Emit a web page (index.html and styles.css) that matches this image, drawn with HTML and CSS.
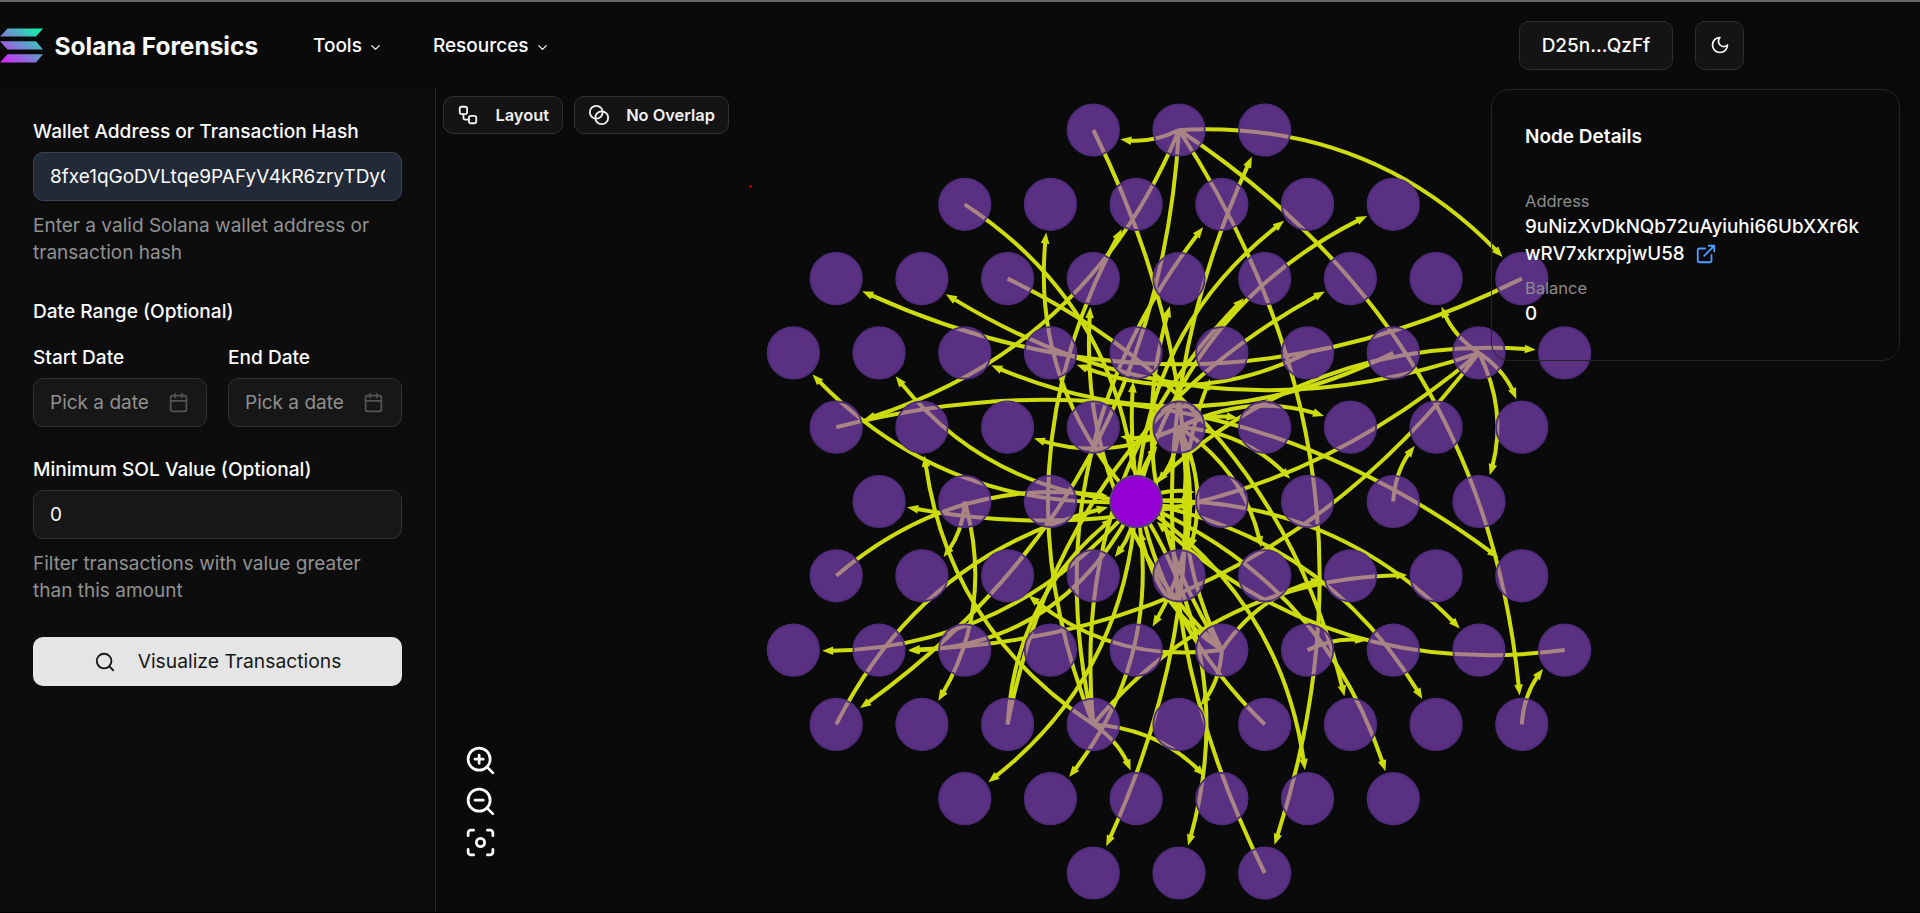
FILE: index.html
```html
<!DOCTYPE html>
<html lang="en">
<head>
<meta charset="utf-8">
<title>Solana Forensics</title>
<link rel="stylesheet" href="styles.css">
</head>
<body>
<div class="app">
  <header class="header">
    <div class="brand">
      <svg class="logo" width="43" height="35" viewBox="0 0 43 35">
        <defs><linearGradient id="sol" gradientUnits="userSpaceOnUse" x1="38" y1="-3" x2="6" y2="38"><stop offset="0" stop-color="#00ffa3"/><stop offset="1" stop-color="#dc1fff"/></linearGradient></defs>
        <g fill="url(#sol)"><path d="M7.500 .5H43L36 8.500H0z"/><path d="M0 13.200H36L43 21.400H7.500z"/><path d="M7.500 26.200H43L36 34.400H0z"/></g>
      </svg>
      <span class="brand-name">Solana Forensics</span>
    </div>
    <nav class="nav">
      <a class="nav-item">Tools <svg width="15" height="15" viewBox="0 0 24 24" class="ico"><path d="m6 9 6 6 6-6"/></svg></a>
      <a class="nav-item">Resources <svg width="15" height="15" viewBox="0 0 24 24" class="ico"><path d="m6 9 6 6 6-6"/></svg></a>
    </nav>
    <div class="actions">
      <button class="btn wallet">D25n...QzFf</button>
      <button class="btn theme"><svg width="20" height="20" viewBox="0 0 24 24" class="ico"><path d="M12 3a6 6 0 0 0 9 9 9 9 0 1 1-9-9Z"/></svg></button>
    </div>
  </header>
  <main class="main">
    <aside class="sidebar">
      <label class="label">Wallet Address or Transaction Hash</label>
      <div class="field filled"><span class="clip">8fxe1qGoDVLtqe9PAFyV4kR6zryTDyQb</span></div>
      <p class="hint">Enter a valid Solana wallet address or transaction hash</p>
      <h3 class="label range">Date Range (Optional)</h3>
      <div class="dates">
        <div class="date"><label class="label">Start Date</label>
          <div class="field pick"><span>Pick a date</span><svg width="21" height="21" viewBox="0 0 24 24" class="ico"><path d="M8 2v4M16 2v4M3 10h18"/><rect x="3" y="4" width="18" height="18" rx="2"/></svg></div></div>
        <div class="date"><label class="label">End Date</label>
          <div class="field pick"><span>Pick a date</span><svg width="21" height="21" viewBox="0 0 24 24" class="ico"><path d="M8 2v4M16 2v4M3 10h18"/><rect x="3" y="4" width="18" height="18" rx="2"/></svg></div></div>
      </div>
      <label class="label min">Minimum SOL Value (Optional)</label>
      <div class="field">0</div>
      <p class="hint">Filter transactions with value greater than this amount</p>
      <button class="submit"><svg width="22" height="22" viewBox="0 0 24 24" class="ico"><circle cx="11" cy="11" r="8"/><path d="m21 21-4.300-4.300"/></svg><span>Visualize Transactions</span></button>
    </aside>
    <section class="canvas">
      <svg class="graph" id="graph" width="1484" height="825" viewBox="436 88 1484 825"></svg>
      <div class="toolbar">
        <button class="tool"><svg width="22" height="22" viewBox="0 0 24 24" class="ico"><rect x="3" y="3" width="8" height="8" rx="2"/><path d="M7 11v4a2 2 0 0 0 2 2h4"/><rect x="13" y="13" width="8" height="8" rx="2"/></svg><span>Layout</span></button>
        <button class="tool overlap"><svg width="22" height="22" viewBox="0 0 24 24" class="ico"><circle cx="9" cy="9" r="7"/><circle cx="15" cy="15" r="7"/></svg><span>No Overlap</span></button>
      </div>
      <div class="zoom">
        <svg width="33" height="33" viewBox="0 0 24 24" class="ico"><circle cx="11" cy="11" r="8"/><path d="m21 21-4.350-4.350M11 8v6M8 11h6"/></svg>
        <svg width="33" height="33" viewBox="0 0 24 24" class="ico"><circle cx="11" cy="11" r="8"/><path d="m21 21-4.350-4.350M8 11h6"/></svg>
        <svg width="33" height="33" viewBox="0 0 24 24" class="ico"><circle cx="12" cy="12" r="3"/><path d="M3 7V5a2 2 0 0 1 2-2h2M17 3h2a2 2 0 0 1 2 2v2M21 17v2a2 2 0 0 1-2 2h-2M7 21H5a2 2 0 0 1-2-2v-2"/></svg>
      </div>
      <div class="card">
        <h2 class="card-title">Node Details</h2>
        <div class="key">Address</div>
        <div class="value">9uNizXvDkNQb72uAyiuhi66UbXXr6k<br>wRV7xkrxpjwU58 <svg width="22" height="22" viewBox="0 0 24 24" class="ico link"><path d="M15 3h6v6M10 14 21 3M18 13v6a2 2 0 0 1-2 2H5a2 2 0 0 1-2-2V8a2 2 0 0 1 2-2h6"/></svg></div>
        <div class="key balance">Balance</div>
        <div class="value">0</div>
      </div>
    </section>
  </main>
</div>
<script src="graph.js"></script>
</body>
</html>
```
FILE: styles.css
```css
* { box-sizing: border-box; }
body { margin: 0; background: #0a0a0a; color: #fafafa; font-family: Inter, "Liberation Sans", sans-serif; font-size: 19px; line-height: 27px; }
button { font: inherit; color: inherit; }
h2, h3, p { margin: 0; font-size: inherit; font-weight: inherit; }
.ico { fill: none; stroke: currentColor; stroke-width: 2; stroke-linecap: round; stroke-linejoin: round; flex: none; }
.app { width: 1920px; height: 913px; display: flex; flex-direction: column; overflow: hidden; border-bottom: 1px solid #000; }
.header { height: 88px; border-top: 2px solid #666; display: flex; align-items: center; padding-right: 176px; }
.brand { display: flex; align-items: center; gap: 11.5px; width: 313px; }
.logo { flex: none; }
.brand-name { font-size: 24.500px; font-weight: 700; white-space: nowrap; position: relative; top: 1px; }
.nav { display: flex; gap: 50px; font-weight: 500; }
.nav-item { display: flex; align-items: center; gap: 6px; }
.nav-item .ico { position: relative; top: 2px; }
.actions { margin-left: auto; display: flex; gap: 22px; }
.btn { height: 49px; border: 1px solid #2e2e2e; border-radius: 10px; background: #141414; font-weight: 500; padding: 0; display: flex; align-items: center; justify-content: center; }
.wallet { width: 154px; }
.theme { width: 49px; }
.main { flex: 1; display: flex; min-height: 0; }
.sidebar { width: 436px; flex: none; background: #0d0d0d; border-right: 1px solid #262626; padding: 30px 33px 0; }
.label { display: block; font-size: 19.100px; font-weight: 500; margin-bottom: 7px; white-space: nowrap; }
.field { height: 49px; border: 1px solid #333; border-radius: 10px; background: #171717; padding: 0 16px; display: flex; align-items: center; }
.filled { background: #232a37; border-color: #3b4453; }
.clip { overflow: hidden; white-space: nowrap; }
.hint { font-size: 19.050px; color: #919191; margin-top: 11px; }
.range { margin: 32px 0 19px; }
.dates { display: flex; gap: 21px; }
.date { flex: 1; }
.pick { justify-content: space-between; padding-right: 17px; color: #8f8f8f; }
.pick .ico { color: #555; }
.min { margin-top: 29px; }
.submit { width: 100%; height: 49px; margin-top: 33px; border: 0; border-radius: 10px; background: #e5e5e5; color: #171717; font-size: 19.300px; display: flex; align-items: center; justify-content: center; gap: 22px; }
.canvas { flex: 1; position: relative; }
.graph { display: block; }
.toolbar { position: absolute; left: 7px; top: 8px; display: flex; gap: 11px; }
.tool { height: 38px; border: 1px solid #333; border-radius: 10px; background: #141414; padding: 0 13px; font-size: 16.400px; font-weight: 600; color: #f0f0f0; display: flex; align-items: center; justify-content: space-between; width: 120px; }
.overlap { width: 155px; }
.zoom { position: absolute; left: 28px; top: 656px; display: flex; flex-direction: column; gap: 8px; }
.card { position: absolute; left: 1055px; top: 1px; width: 409px; height: 272px; border: 1px solid #232323; border-radius: 18px; padding: 33px 33px 0; }
.card-title { font-size: 19px; font-weight: 600; margin-bottom: 39px; }
.key { font-size: 16.500px; line-height: 24px; color: #8c8c8c; }
.value { font-size: 18.800px; font-weight: 500; white-space: nowrap; }
.balance { margin-top: 9px; }
.link { color: #4a9eff; vertical-align: -5px; margin-left: 5px; }
.edge { fill: none; stroke: #cddc0d; stroke-width: 4; }
.head { fill: #cddc0d; }
.node { fill: #8f49d4; fill-opacity: .6; }
.ring { fill: none; stroke: #502d7c; stroke-width: 1.800; }
.root { fill: #9400d3; stroke: #54407c; stroke-width: 1.800; }
```
FILE: graph.js
```js
// Nodes sit on a hexagonal grid: rows of columns, two half-steps apart.
const ROWS = [2, 5, 8, 9, 8, 7, 8, 9, 8, 5, 2];
const px = k => 1179 + 42.85 * k;
const py = j => 130 + 74.3 * j;
const R = 26.5;

// [source column, source row, target column, target row, curvature]
const EDGES = [
  [0,0,-2,0],[0,0,8,2],[0,0,2,10],[0,0,8,8],[0,0,-8,4],[0,0,-8,8],
  [-2,0,-2,10],[-5,1,-1,5],[-4,2,4,8],[8,2,-8,2],
  [7,3,-6,2],[7,3,-7,5],[7,3,-7,7],[7,3,6,2],[7,3,8,4],[7,3,7,5],
  [5,3,-5,3],[3,3,-3,3],[-8,4,8,6],
  [2,10,2,0],[2,8,-1,3],[9,7,-1,5],[8,8,9,7],[5,5,6,4],[3,7,5,7],
  [-1,5,-3,1],[-1,5,3,1],[-1,5,5,1],[-1,5,9,3],[-1,5,-9,3],[-1,5,-7,3],
  [-1,5,7,7],[-1,5,6,8],[-1,5,5,9],[-1,5,3,9],[-1,5,0,10],[-1,5,-3,9],
  [-1,5,-5,9],[-1,5,-9,7],[-1,5,-7,7,.33],[-1,5,-2,6],
  [-2,8,-1,1],[-2,8,1,1],[-2,8,2,2],[-2,8,6,6],[-2,8,-6,4],[-2,8,1,9],[-2,8,-1,9],
  [-4,8,4,2],[-4,8,-1,5],[-8,6,-1,5],[-8,8,-1,5],[-5,5,-6,8],[-5,5,-6,6],
  [1,7,-2,2],[1,7,0,2],[1,7,1,3],[1,7,-4,6],[1,7,0,8],[1,7,4,6],[1,7,-1,5],
  [0,4,-4,4],[0,4,-2,4],[0,4,3,5],[0,4,2,4],[0,4,4,4],[0,4,2,6],[0,4,-1,7],
  [0,4,0,6],[0,4,0,6,.11],[0,4,0,6,.15],[0,4,-1,5],[-1,5,0,4],
  [-1,5,1,5],[-1,5,1,5,.03],[-1,5,1,5,-.12]
];

let out = '';
for (const [a, b, c, d, curve = .25] of EDGES) {
  const x0 = px(a), y0 = py(b), x1 = px(c), y1 = py(d);
  const dx = x1 - x0, dy = y1 - y0;
  const cx = (x0 + x1) / 2 + curve * dy, cy = (y0 + y1) / 2 - curve * dx;
  const at = t => [(1-t)*(1-t)*x0 + 2*t*(1-t)*cx + t*t*x1, (1-t)*(1-t)*y0 + 2*t*(1-t)*cy + t*t*y1];
  const trim = r => { let t = 1; while (t > 0 && Math.hypot(at(t)[0]-x1, at(t)[1]-y1) < r) t -= .002; return t; };
  const [tx, ty] = at(trim(R + 2));
  const tb = trim(R + 11);
  const [bx, by] = at(tb);
  const qx = x0 + (cx - x0) * tb, qy = y0 + (cy - y0) * tb;
  const len = Math.hypot(tx - bx, ty - by), ux = (tx - bx) / len, uy = (ty - by) / len;
  const ax = tx - ux * 11, ay = ty - uy * 11;
  out += `<path class="edge" d="M${x0} ${y0}Q${qx} ${qy} ${bx} ${by}"/>`;
  out += `<path class="head" d="M${tx} ${ty}L${ax - uy*4.3} ${ay + ux*4.3}L${ax + uy*4.3} ${ay - ux*4.3}Z"/>`;
}
ROWS.forEach((n, j) => {
  for (let k = -n; k <= n; k += 2) {
    if (k === -1 && j === 5) out += `<circle class="root" cx="${px(k)}" cy="${py(j)}" r="25.800"/>`;
    else out += `<circle class="node" cx="${px(k)}" cy="${py(j)}" r="26"/><circle class="ring" cx="${px(k)}" cy="${py(j)}" r="25.700"/>`;
  }
});
out += '<circle cx="750.5" cy="186.500" r="1.300" fill="#e00000"/>';
document.getElementById('graph').innerHTML = out;
```
